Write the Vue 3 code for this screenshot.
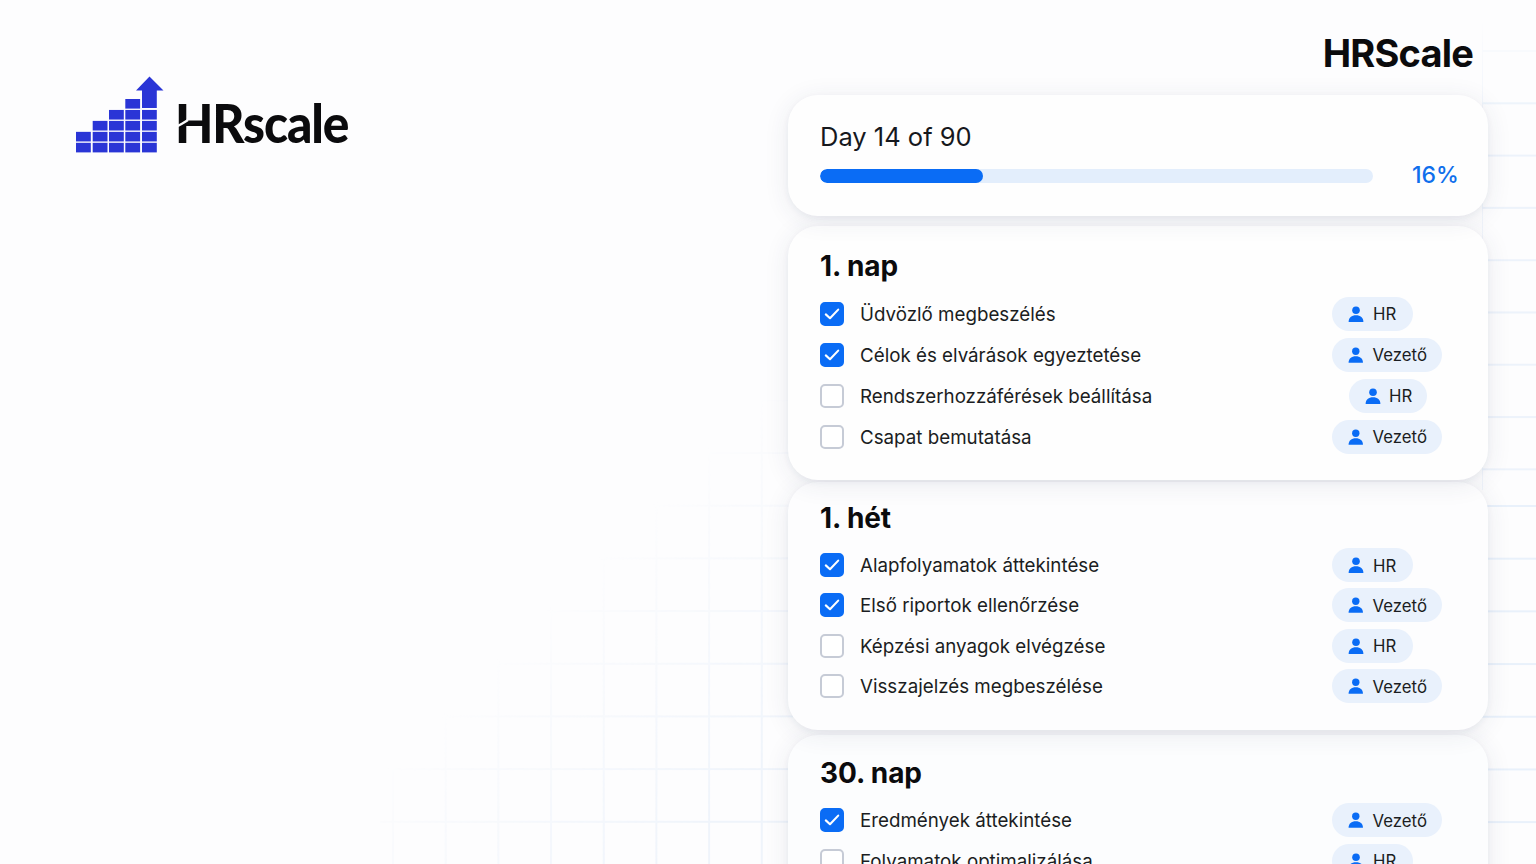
<script setup>
const sections = [
  { title: '1. nap', cls: 'first', rows: [
    { t: 'Üdvözlő megbeszélés', done: true, who: 'HR' },
    { t: 'Célok és elvárások egyeztetése', done: true, who: 'Vezető' },
    { t: 'Rendszerhozzáférések beállítása', done: false, who: 'HR', shift: true },
    { t: 'Csapat bemutatása', done: false, who: 'Vezető' },
  ]},
  { title: '1. hét', cls: 'second', rows: [
    { t: 'Alapfolyamatok áttekintése', done: true, who: 'HR' },
    { t: 'Első riportok ellenőrzése', done: true, who: 'Vezető' },
    { t: 'Képzési anyagok elvégzése', done: false, who: 'HR' },
    { t: 'Visszajelzés megbeszélése', done: false, who: 'Vezető' },
  ]},
  { title: '30. nap', cls: 'third', rows: [
    { t: 'Eredmények áttekintése', done: true, who: 'Vezető' },
    { t: 'Folyamatok optimalizálása', done: false, who: 'HR' },
  ]},
]
const colX = [76, 92.7, 109, 125.3, 142]
const colFrom = [3, 2, 1, 0, 1]
const bars = []
colX.forEach((x, c) => {
  for (let r = colFrom[c]; r < 5; r++) bars.push({ x, y: 99 + r * 10.95 })
})
</script>

<template>
  <div class="page">
    <div class="grid-left"></div>
    <div class="strip strip-top"></div>
    <div class="strip strip-bottom"></div>
    <div class="logo">
      <svg class="mark" width="90" height="80" viewBox="76 76 90 80">
        <rect v-for="(b, i) in bars" :key="i" :x="b.x" :y="b.y" width="14.8" height="9.6" fill="#2a35d6" />
        <path d="M142 108V90.5H136L149.5 76.5L163.5 90.5H156.8V108Z" fill="#2a35d6" />
      </svg>
      <span class="wordmark">HRscale</span>
      <svg class="slit" width="32" height="40" viewBox="0 0 32 40"><path d="M0 24C5 23 9 20 14 17" fill="none" stroke="#fdfdfe" stroke-width="2.4"/></svg>
    </div>
    <main class="column">
      <div class="brand">HRScale</div>
      <section class="card progress">
        <div class="day">Day 14 of 90</div>
        <div class="bar-row">
          <div class="track"><div class="fill" :style="{ width: '29.5%' }"></div></div>
          <span class="pct">16%</span>
        </div>
      </section>
      <section v-for="s in sections" :key="s.title" class="card list" :class="s.cls">
        <h2>{{ s.title }}</h2>
        <div v-for="r in s.rows" :key="r.t" class="row">
          <span class="check" :class="{ done: r.done }">
            <svg v-if="r.done" width="16" height="16" viewBox="0 0 16 16"><path d="M1.8 8.4L6 12.2L14.2 3.6" fill="none" stroke="#fff" stroke-width="2.1" stroke-linecap="round" stroke-linejoin="round"/></svg>
          </span>
          <span class="label">{{ r.t }}</span>
          <span class="who">
            <span class="pill" :class="{ shift: r.shift }">
              <svg width="16" height="16" viewBox="0 0 16 16"><circle cx="8" cy="4.2" r="3.8" fill="#0a6cf5"/><path d="M0.6 16C0.6 11.4 3.6 9.2 8 9.2C12.4 9.2 15.4 11.4 15.4 16Z" fill="#0a6cf5"/></svg>
              <span class="who-text">{{ r.who }}</span>
            </span>
          </span>
        </div>
      </section>
    </main>
  </div>
</template>

<style scoped>
.page {
  position: relative;
  width: 1536px;
  height: 864px;
  overflow: hidden;
  display: flex;
  justify-content: space-between;
  align-items: flex-start;
  background: #fdfdfe;
  font-family: Inter, "Liberation Sans", sans-serif;
  color: #12141a;
}
.grid-left {
  position: absolute;
  left: 380px;
  top: 400px;
  width: 420px;
  height: 464px;
  background-image:
    linear-gradient(to right, #eff4fb 1.5px, transparent 1.5px),
    linear-gradient(to bottom, #eff4fb 1.5px, transparent 1.5px);
  background-size: 52.7px 52.7px;
  background-position: 12px 52px;
  -webkit-mask-image: linear-gradient(135deg, transparent 42%, #000 85%);
  mask-image: linear-gradient(135deg, transparent 42%, #000 85%);
}
.strip {
  position: absolute;
  left: 1482px;
  width: 54px;
  background-image: linear-gradient(to bottom, #e9f1fb 1.5px, transparent 1.5px);
}
.strip-top {
  top: 0;
  height: 490px;
  background-image:
    linear-gradient(to bottom, #edf3fb 1.5px, transparent 1.5px),
    linear-gradient(to right, #f1f5fb 1.5px, transparent 1.5px);
  background-size: 100% 52.3px, 100% 100%;
  background-position: 0 50px, 0 0;
  background-repeat: repeat-y, no-repeat;
  -webkit-mask-image: linear-gradient(to bottom, transparent 20px, #000 110px);
  mask-image: linear-gradient(to bottom, transparent 20px, #000 110px);
}
.strip-bottom {
  top: 490px;
  height: 374px;
  background-size: 100% 52.7px;
  background-position: 0 15px;
}
.logo {
  position: relative;
  display: flex;
  align-items: flex-end;
  margin: 76px 0 0 76px;
  gap: 9px;
}
.mark { display: block; }
.wordmark {
  font-family: Lato, sans-serif;
  font-weight: 900;
  font-size: 54px;
  line-height: 50px;
  letter-spacing: -1.2px;
  color: #0b0b0d;
  margin-bottom: 8px;
  transform: scaleX(0.92);
  transform-origin: left center;
  width: 175px;
}
.slit {
  position: absolute;
  left: 98px;
  top: 27px;
}
.column {
  position: relative;
  width: 700px;
  margin-right: 48px;
  display: flex;
  flex-direction: column;
}
.brand {
  font-size: 38px;
  font-weight: 700;
  letter-spacing: -0.8px;
  line-height: 46px;
  text-align: right;
  color: #0b0b0d;
  margin: 30px 15px 19px 0;
}
.card {
  position: relative;
  background: #fefefe;
  border-radius: 30px;
  box-shadow: 0 4px 26px rgba(40, 50, 90, 0.09), 0 2px 6px rgba(40, 50, 90, 0.05);
  padding: 0 32px;
}
.progress {
  z-index: 4;
  height: 121px;
  padding-top: 26px;
  box-sizing: border-box;
}
.day {
  font-size: 25.5px;
  line-height: 32px;
  color: #16181d;
}
.bar-row {
  display: flex;
  align-items: center;
  margin-top: 8px;
  height: 30px;
}
.track {
  flex: none;
  width: 553px;
  height: 14px;
  background: #e3eefc;
  border-radius: 7px;
  overflow: hidden;
}
.fill {
  height: 100%;
  background: #0a6cf5;
  border-radius: 7px;
}
.pct {
  margin: 0 0 3px 39px;
  font-size: 23px;
  font-weight: 500;
  color: #0f6fec;
}
.list { box-sizing: border-box; }
.first { z-index: 3; height: 254px; margin-top: 10px; padding-top: 22px; }
.second { z-index: 2; height: 248px; margin-top: 2px; padding-top: 18px; background: #fdfdfe; }
.third { z-index: 1; height: 200px; margin-top: 5px; padding-top: 20px; background: #fcfdfe; }
h2 {
  margin: 0 0 9px;
  font-size: 28px;
  line-height: 36px;
  font-weight: 700;
  letter-spacing: -0.1px;
  color: #0b0b0d;
}
.row {
  display: flex;
  align-items: center;
  height: 40.5px;
}
.first .row { height: 41px; }
.second .row { height: 40.3px; }
.check {
  width: 24px;
  height: 24px;
  box-sizing: border-box;
  border-radius: 5px;
  border: 2px solid #c6cbd6;
  background: #fff;
  display: flex;
  align-items: center;
  justify-content: center;
  flex: none;
}
.check.done {
  background: #0a6cf5;
  border-color: #0a6cf5;
}
.label {
  margin-left: 16px;
  padding-top: 1px;
  font-size: 18.75px;
  flex: 1;
  color: #1b1d22;
}
.who {
  width: 110px;
  margin-right: 14px;
  flex: none;
  display: flex;
}
.pill {
  display: inline-flex;
  align-items: center;
  gap: 9px;
  height: 34px;
  min-width: 81px;
  box-sizing: border-box;
  padding: 0 15px 0 16px;
  border-radius: 17px;
  background: #e9f1fc;
  font-size: 16.8px;
  color: #1b1d22;
  white-space: nowrap;
}
.who-text { padding-top: 1px; }
.pill.shift { margin-left: 17px; min-width: 78px; gap: 8px; }
</style>
